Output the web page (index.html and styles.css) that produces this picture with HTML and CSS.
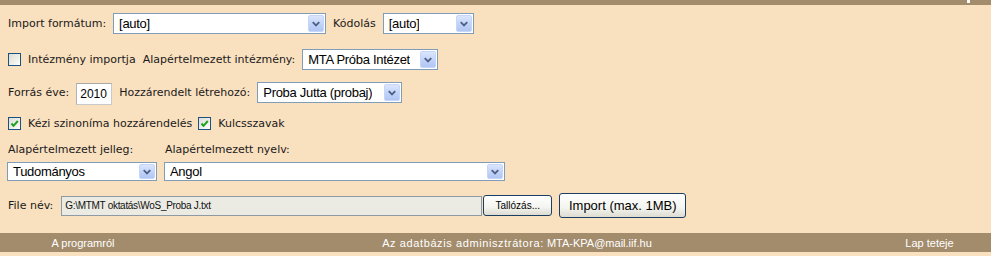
FILE: index.html
```html
<!DOCTYPE html>
<html lang="hu">
<head>
<meta charset="utf-8">
<title>Import</title>
<link rel="stylesheet" href="styles.css">
</head>
<body>
<div class="topbar"><span class="topmark"></span></div>
<div class="form">
  <div class="row r1">
    <span class="lbl">Import formátum:</span>
    <div class="sel w213"><span class="val">[auto]</span><span class="arr"><svg width="15" height="17" viewBox="0 0 15 17"><path d="M4 7 L7.5 10.5 L11 7" fill="none" stroke="#4d6185" stroke-width="2"/></svg></span></div>
    <span class="lbl">Kódolás</span>
    <div class="sel w91"><span class="val">[auto]</span><span class="arr"><svg width="15" height="17" viewBox="0 0 15 17"><path d="M4 7 L7.5 10.5 L11 7" fill="none" stroke="#4d6185" stroke-width="2"/></svg></span></div>
  </div>
  <div class="row r2">
    <span class="cb"></span>
    <span class="lbl">Intézmény importja</span>
    <span class="lbl">Alapértelmezett intézmény:</span>
    <div class="sel w136"><span class="val">MTA Próba Intézet</span><span class="arr"><svg width="15" height="17" viewBox="0 0 15 17"><path d="M4 7 L7.5 10.5 L11 7" fill="none" stroke="#4d6185" stroke-width="2"/></svg></span></div>
  </div>
  <div class="row r3">
    <span class="lbl">Forrás éve:</span>
    <span class="txt">2010</span>
    <span class="lbl">Hozzárendelt létrehozó:</span>
    <div class="sel w145"><span class="val">Proba Jutta (probaj)</span><span class="arr"><svg width="15" height="17" viewBox="0 0 15 17"><path d="M4 7 L7.5 10.5 L11 7" fill="none" stroke="#4d6185" stroke-width="2"/></svg></span></div>
  </div>
  <div class="row r4">
    <span class="cb"><svg width="11" height="11" viewBox="0 0 11 11"><path d="M2.5 5.5 L4.5 7.8 L8.8 3" fill="none" stroke="#21a121" stroke-width="2"/></svg></span>
    <span class="lbl">Kézi szinoníma hozzárendelés</span>
    <span class="cb"><svg width="11" height="11" viewBox="0 0 11 11"><path d="M2.5 5.5 L4.5 7.8 L8.8 3" fill="none" stroke="#21a121" stroke-width="2"/></svg></span>
    <span class="lbl">Kulcsszavak</span>
  </div>
  <div class="grid r5">
    <div class="col">
      <span class="lbl">Alapértelmezett jelleg:</span>
      <div class="sel w150 s19"><span class="val">Tudományos</span><span class="arr"><svg width="15" height="17" viewBox="0 0 15 17"><path d="M4 7 L7.5 10.5 L11 7" fill="none" stroke="#4d6185" stroke-width="2"/></svg></span></div>
    </div>
    <div class="col">
      <span class="lbl">Alapértelmezett nyelv:</span>
      <div class="sel w341 s19"><span class="val">Angol</span><span class="arr"><svg width="15" height="17" viewBox="0 0 15 17"><path d="M4 7 L7.5 10.5 L11 7" fill="none" stroke="#4d6185" stroke-width="2"/></svg></span></div>
    </div>
  </div>
  <div class="row r7">
    <span class="lbl">File név:</span>
    <div class="file">
      <span class="path">G:\MTMT oktatás\WoS_Proba J.txt</span>
      <span class="btn small">Tallózás...</span>
    </div>
    <span class="btn big">Import (max. 1MB)</span>
  </div>
</div>
<div class="footer">
  <span class="fc left">A programról</span>
  <span class="fc mid"><span class="sp">Az adatbázis adminisztrátora:</span> MTA-KPA@mail.iif.hu</span>
  <span class="fc right">Lap teteje</span>
</div>
<div class="bottom"></div>
</body>
</html>
```

FILE: styles.css
```css
html, body {
  margin: 0;
  padding: 0;
  background: #f9e0bf;
}
body {
  width: 991px;
  height: 256px;
  overflow: hidden;
  font-family: "DejaVu Sans", Verdana, sans-serif;
  font-size: 11px;
  color: #1a1a1a;
}
.topbar {
  height: 5px;
  background: #a38c6c;
  display: flex;
  justify-content: flex-end;
}
.topmark {
  width: 3px;
  height: 3px;
  background: #fff;
  margin-right: 21px;
}
.form {
  padding-left: 8px;
}
.row {
  display: flex;
  align-items: center;
  gap: 7px;
}
.lbl {
  white-space: nowrap;
  line-height: 13px;
}
.r1 { margin-top: 8px; height: 21px; }
.r2 { margin-top: 15px; height: 21px; }
.r3 { margin-top: 11px; height: 23px; }
.r4 { margin-top: 12px; height: 14px; gap: 6px; }
.r4 .cb + .lbl { margin-left: 1px; }
.grid {
  display: flex;
  gap: 7px;
  margin-left: -1px;
  margin-top: 13px;
}
.col {
  display: flex;
  flex-direction: column;
  gap: 6px;
}
.col .lbl { padding-left: 1px; }
.r7 { margin-top: 12px; height: 25px; gap: 6px; }

.sel {
  box-sizing: border-box;
  height: 21px;
  border: 1px solid #7f9db9;
  background: #fff;
  display: flex;
  align-items: center;
  justify-content: space-between;
  padding: 1px;
  font-family: "Liberation Sans", Arial, sans-serif;
  font-size: 13px;
  letter-spacing: -0.3px;
  color: #000;
}
.sel.s19 { height: 19px; }
.sel .val {
  padding-left: 4px;
  white-space: nowrap;
  overflow: hidden;
  line-height: 17px;
}
.sel .arr {
  flex: none;
  box-sizing: border-box;
  width: 16px;
  height: 17px;
  border: 1px solid #c6d6fa;
  border-radius: 2px;
  background: linear-gradient(180deg, #dbe6fd 0%, #c3d4f9 50%, #b1c6f3 100%);
  display: flex;
  align-items: center;
  justify-content: center;
}
.sel.s19 .arr { height: 15px; }
.sel .arr svg { display: block; }
.w213 { width: 213px; }
.w91 { width: 91px; }
.w136 { width: 136px; }
.w145 { width: 145px; }
.w150 { width: 150px; }
.w341 { width: 341px; }

.cb {
  box-sizing: border-box;
  width: 13px;
  height: 13px;
  border: 1px solid #1c5180;
  background: linear-gradient(135deg, #dcdcd6 0%, #f3f3ef 70%, #fff 100%);
  display: flex;
  align-items: center;
  justify-content: center;
  flex: none;
}
.cb svg { display: block; }

.txt {
  box-sizing: border-box;
  width: 36px;
  height: 22px;
  margin-top: 3px;
  border: 1px solid #c9c9c9;
  border-top-color: #a9a9a9;
  border-left-color: #b4b4b4;
  background: #fff;
  font-family: "Liberation Sans", Arial, sans-serif;
  font-size: 12px;
  line-height: 20px;
  padding-left: 3px;
  color: #000;
}

.file {
  display: flex;
  align-items: center;
  margin-left: 2px;
}
.path {
  box-sizing: border-box;
  width: 421px;
  height: 20px;
  border: 1px solid #8f9aa5;
  background: #ebebe4;
  font-family: "Liberation Sans", Arial, sans-serif;
  font-size: 10px;
  letter-spacing: -0.3px;
  line-height: 18px;
  padding-left: 3px;
  color: #111;
}
.btn {
  box-sizing: border-box;
  border: 1px solid #1d3e63;
  border-radius: 3px;
  background: linear-gradient(180deg, #ffffff 0%, #f4f4f0 60%, #dcdcd2 100%);
  font-family: "Liberation Sans", Arial, sans-serif;
  color: #000;
  display: flex;
  align-items: center;
  justify-content: center;
  white-space: nowrap;
}
.btn.small {
  width: 69px;
  height: 21px;
  font-size: 10px;
  margin-left: 1px;
}
.btn.big {
  width: 127px;
  height: 25px;
  font-size: 13px;
  margin-left: 1px;
}

.footer {
  margin-top: 15px;
  height: 19px;
  background: #a38c6c;
  display: flex;
  align-items: center;
  font-family: "Liberation Sans", Arial, sans-serif;
  font-size: 11px;
  color: #fff;
}
.fc {
  text-align: center;
  white-space: nowrap;
}
.fc.left { width: 166px; }
.fc.mid { width: 702px; }
.fc.right { width: 123px; }
.fc .sp { letter-spacing: 0.6px; }
.bottom {
  height: 4px;
  background: #f9e0bf;
}
```
